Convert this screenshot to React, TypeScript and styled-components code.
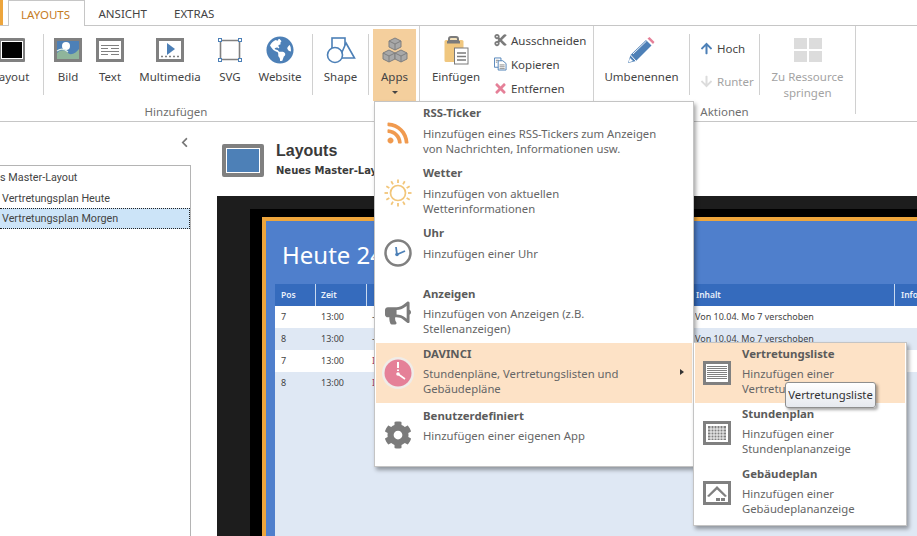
import React from 'react';
import styled, { createGlobalStyle } from 'styled-components';
import {
  FaArrowDown,
  FaArrowUp,
  FaBullhorn,
  FaChevronLeft,
  FaCog,
  FaCut,
  FaGlobeAmericas,
  FaRss,
  FaTimes,
} from 'react-icons/fa';

const UI_FONT = `'Noto Sans', 'Open Sans', sans-serif`;

const GlobalStyle = createGlobalStyle`
  html, body {
    margin: 0;
    width: 917px;
    height: 536px;
    overflow: hidden;
    background: #fff;
  }
  body {
    font-family: ${UI_FONT};
    font-size: 12px;
    color: #444;
  }
`;

const Page = styled.div`
  position: relative;
  width: 917px;
  height: 536px;
  overflow: hidden;
`;

/* tabs */
const TabBar = styled.div`
  display: flex;
  height: 25px;
  border-bottom: 1px solid #c6c6c6;
  box-sizing: content-box;
`;

const FileStub = styled.div`
  width: 3px;
  height: 25px;
  background: #eda53c;
  margin-right: 5px;
`;

const Tab = styled.div<{ $active?: boolean }>`
  box-sizing: border-box;
  height: ${(p) => (p.$active ? '26px' : '25px')};
  padding: 0 ${(p) => (p.$active ? '12px' : '13.5px')};
  min-width: ${(p) => (p.$active ? '77px' : '0')};
  line-height: 28px;
  font-size: 11.5px;
  text-transform: uppercase;
  white-space: nowrap;
  color: ${(p) => (p.$active ? '#c67c1e' : '#444')};
  background: #fff;
  ${(p) => p.$active && 'border: 1px solid #c6c6c6; border-bottom: 0; line-height: 27px;'}
`;

/* ribbon */
const Ribbon = styled.div`
  display: flex;
  height: 95px;
  margin-left: -16px;
  border-bottom: 1px solid #c6c6c6;
`;

const Group = styled.div<{ $width: number; $edge?: boolean }>`
  box-sizing: border-box;
  width: ${(p) => p.$width}px;
  display: flex;
  flex-direction: column;
  height: ${(p) => (p.$edge ? '88px' : '95px')};
  ${(p) => p.$edge && 'border-right: 1px solid #d0d0d0;'}
`;

const GroupEdge = styled.div`
  width: 1px;
  height: 88px;
  background: #d0d0d0;
  flex: none;
`;

const GroupBody = styled.div`
  display: flex;
  height: 75px;
  padding-top: 3px;
`;

const GroupLabel = styled.div<{ $inset?: number }>`
  text-align: center;
  font-size: 11.5px;
  line-height: 16px;
  padding-right: ${(p) => p.$inset ?? 0}px;
  color: #6f6f6f;
`;

const Separator = styled.div`
  width: 1px;
  height: 61px;
  margin-top: 5px;
  background: #d0d0d0;
  flex: none;
`;

const RibbonButton = styled.div<{ $width: number; $open?: boolean; $disabled?: boolean; $gap?: number }>`
  box-sizing: border-box;
  flex: none;
  width: ${(p) => p.$width}px;
  height: 72px;
  margin-left: ${(p) => p.$gap ?? 0}px;
  padding-top: 8px;
  display: flex;
  flex-direction: column;
  align-items: center;
  background: ${(p) => (p.$open ? '#f4cf9d' : 'transparent')};
  color: ${(p) => (p.$disabled ? '#a3a3a3' : '#444')};
`;

const IconBox = styled.div`
  height: 26px;
  display: flex;
  align-items: center;
  justify-content: center;
  flex: none;
`;

const ButtonLabel = styled.div`
  margin-top: 6px;
  font-size: 11.5px;
  line-height: 15.5px;
  text-align: center;
  white-space: nowrap;
`;

const Caret = styled.div`
  width: 0;
  height: 0;
  margin-top: 6px;
  border-left: 3px solid transparent;
  border-right: 3px solid transparent;
  border-top: 3px solid #444;
`;

const SmallStack = styled.div<{ $width: number; $pad: number; $rowGap: number; $top: number }>`
  box-sizing: border-box;
  width: ${(p) => p.$width}px;
  padding-left: ${(p) => p.$pad}px;
  padding-top: ${(p) => p.$top}px;
  display: flex;
  flex-direction: column;
  gap: ${(p) => p.$rowGap}px;
  flex: none;
`;

const SmallButton = styled.div<{ $disabled?: boolean }>`
  display: flex;
  align-items: center;
  height: 16px;
  gap: 4px;
  font-size: 11.5px;
  white-space: nowrap;
  color: ${(p) => (p.$disabled ? '#a3a3a3' : '#444')};
`;

const SmallIcon = styled.span`
  width: 13px;
  height: 14px;
  display: inline-flex;
  align-items: center;
  justify-content: center;
  flex: none;
`;

/* body */
const Body = styled.div`
  display: flex;
  height: 414px;
`;

const Sidebar = styled.div`
  width: 191px;
  flex: none;
  display: flex;
  flex-direction: column;
`;

const SidebarHead = styled.div`
  box-sizing: border-box;
  height: 43px;
  flex: none;
  display: flex;
  align-items: center;
  justify-content: flex-end;
  padding: 0 1px 3px 0;
  color: #777;
`;

const TreeBox = styled.div`
  flex: 1;
  border-top: 1px solid #b4b4b4;
  border-right: 1px solid #b4b4b4;
  padding-top: 1px;
  overflow: hidden;
`;

const TreeRow = styled.div<{ $selected?: boolean; $level?: number }>`
  box-sizing: border-box;
  height: 21px;
  line-height: 21px;
  font-family: Roboto, sans-serif;
  font-size: 10.8px;
  white-space: nowrap;
  color: #444;
  padding-left: ${(p) => (p.$level ? 2 : 0)}px;
  text-indent: ${(p) => (p.$level ? 0 : -25)}px;
  ${(p) =>
    p.$selected &&
    'background: #cce4f8; border: 1px dotted #222; border-left: 0; line-height: 20px; margin-top: -1px;'}
`;

const Content = styled.div`
  flex: 1;
  min-width: 0;
  padding-left: 26px;
  display: flex;
  flex-direction: column;
`;

const ContentHead = styled.div`
  height: 74px;
  flex: none;
  padding: 22px 0 0 5px;
  box-sizing: border-box;
  display: flex;
  gap: 12px;
`;

const LayoutGlyph = styled.div`
  box-sizing: border-box;
  width: 42px;
  height: 33px;
  border: 4px solid #808080;
  border-radius: 2px;
  background: #4d80b7;
  box-shadow: inset 0 0 0 1px #fff;
`;

const HeadTitle = styled.div`
  font-family: 'Liberation Sans', Arial, sans-serif;
  font-weight: bold;
  font-size: 16px;
  line-height: 18px;
  margin-top: -2px;
  color: #3a3a3a;
`;

const HeadSub = styled.div`
  font-family: 'DejaVu Sans', Verdana, sans-serif;
  font-weight: bold;
  font-size: 10px;
  line-height: 13px;
  margin-top: 4px;
  color: #3a3a3a;
  white-space: nowrap;
`;

const Preview = styled.div`
  flex: 1;
  min-height: 0;
  overflow: hidden;
  background: #1d1d1d;
  padding: 13px 0 0 33px;
  display: flex;
`;

const PreviewInner = styled.div`
  flex: 1;
  min-width: 0;
  background: #000;
  padding: 8px 0 0 12px;
  display: flex;
`;

const Slide = styled.div`
  flex: 1;
  min-width: 0;
  background: #4f7fcc;
  border-top: 4px solid #eda53c;
  border-left: 4px solid #eda53c;
  padding-left: 9px;
  display: flex;
  flex-direction: column;
`;

const SlideTitle = styled.div`
  height: 63px;
  flex: none;
  padding-left: 7px;
  box-sizing: border-box;
  font-size: 24px;
  line-height: 68px;
  color: #fff;
  white-space: nowrap;
`;

const TableHead = styled.div`
  display: flex;
  height: 22px;
  flex: none;
  background: #356bbd;
  color: #e9f0fa;
  font-size: 8.5px;
  font-weight: 600;
  line-height: 22px;
`;

const Cell = styled.div<{ $w: number; $line?: boolean; $red?: boolean; $pad?: number }>`
  box-sizing: border-box;
  width: ${(p) => p.$w}px;
  flex: none;
  padding-left: ${(p) => p.$pad ?? 6}px;
  white-space: nowrap;
  overflow: hidden;
  ${(p) => p.$line && 'border-right: 1px solid #c9d9ef;'}
  ${(p) => p.$red && 'color: #a43a62;'}
`;

const TableBody = styled.div`
  background: #dfe8f4;
  flex: 1;
`;

const TableRow = styled.div<{ $even?: boolean }>`
  display: flex;
  height: 22px;
  line-height: 22px;
  font-size: 9px;
  color: #444;
  background: ${(p) => (p.$even ? '#dfe8f4' : '#fff')};
`;

/* drop menus */
const Menu = styled.div<{ $left: number; $top: number; $width: number; $height: number; $pad?: number }>`
  position: absolute;
  box-sizing: border-box;
  left: ${(p) => p.$left}px;
  top: ${(p) => p.$top}px;
  width: ${(p) => p.$width}px;
  height: ${(p) => p.$height}px;
  background: #fff;
  border: 1px solid #c4c4c4;
  box-shadow: 2px 3px 4px rgba(0, 0, 0, 0.35);
  padding: ${(p) => p.$pad ?? 0}px 1px 0;
`;

const MenuItem = styled.div<{ $hot?: boolean; $gap?: number }>`
  position: relative;
  box-sizing: border-box;
  height: 60px;
  margin-top: ${(p) => p.$gap ?? 0}px;
  padding-left: 47px;
  background: ${(p) => (p.$hot ? '#fde2c6' : 'transparent')};
`;

const MenuIcon = styled.div`
  position: absolute;
  left: 0;
  top: 0;
  bottom: 0;
  width: 44px;
  display: flex;
  align-items: center;
  justify-content: center;
  color: #7b7b7b;
`;

const MenuTitle = styled.div<{ $top?: number }>`
  font-weight: 700;
  font-size: 11.4px;
  line-height: 15px;
  padding-top: ${(p) => p.$top ?? 3}px;
  color: #5b5b5b;
`;

const MenuText = styled.div<{ $gap?: number }>`
  font-size: 11.3px;
  line-height: 15px;
  margin-top: ${(p) => p.$gap ?? 5}px;
  color: #666;
  white-space: pre-line;
`;

const Arrow = styled.div`
  position: absolute;
  right: 8px;
  top: 26px;
  width: 0;
  height: 0;
  border-top: 3.5px solid transparent;
  border-bottom: 3.5px solid transparent;
  border-left: 4px solid #333;
`;

const Tooltip = styled.div`
  position: absolute;
  left: 785px;
  top: 382px;
  box-sizing: border-box;
  width: 91px;
  height: 26px;
  border: 1px solid #8e8e8e;
  border-radius: 3px;
  background: linear-gradient(#ffffff, #e6e9ef);
  box-shadow: 2px 2px 3px rgba(0, 0, 0, 0.35);
  font-size: 11.3px;
  line-height: 24px;
  text-align: center;
  color: #333;
  white-space: nowrap;
`;

/* drawn icons */
const LayoutIcon = () => (
  <svg width="27" height="24" viewBox="0 0 27 24">
    <rect x="1.5" y="1.5" width="25" height="21" rx="1.5" fill="#000" stroke="#808080" strokeWidth="3" />
    <rect x="3.5" y="3.5" width="21" height="17" fill="none" stroke="#fff" />
  </svg>
);

const PictureIcon = () => (
  <svg width="28" height="24" viewBox="0 0 28 24">
    <rect x="1.5" y="1.5" width="25" height="21" fill="#4d80b7" stroke="#808080" strokeWidth="3" />
    <circle cx="12" cy="8" r="4" fill="#fff" />
    <path d="M3 15c4-4 8-3 11 0s8 0 11-4v10H3z" fill="#8fb59b" />
    <path d="M3 13c4-3 8-2 11 1" fill="none" stroke="#dfeee5" strokeWidth="1.2" />
  </svg>
);

const TextIcon = () => (
  <svg width="28" height="24" viewBox="0 0 28 24">
    <rect x="1.5" y="1.5" width="25" height="21" fill="#fff" stroke="#808080" strokeWidth="3" />
    <path d="M5 7.5h18M5 10.5h7M15 10.5h8M5 13.5h18M5 16.5h7M15 16.5h8" stroke="#808080" strokeWidth="1.2" />
  </svg>
);

const MediaIcon = () => (
  <svg width="28" height="24" viewBox="0 0 28 24">
    <rect x="1.5" y="1.5" width="25" height="21" fill="#fff" stroke="#808080" strokeWidth="3" />
    <path d="M11 5l8 6-8 6z" fill="#4d80b7" />
    <path d="M5 18.5h18" stroke="#808080" strokeWidth="1.6" strokeDasharray="2 2" />
  </svg>
);

const SvgIcon = () => (
  <svg width="24" height="24" viewBox="0 0 24 24">
    <path d="M3.5 2.5h17M3.5 21.5h17M2.5 3.5v17M21.5 3.5v17" stroke="#808080" strokeWidth="1.6" />
    {[0, 20].flatMap((x) =>
      [0, 20].map((y) => (
        <rect key={`${x}-${y}`} x={x + 0.5} y={y + 0.5} width="3" height="3" fill="#fff" stroke="#4d80b7" />
      )),
    )}
  </svg>
);

const ShapeIcon = () => (
  <svg width="30" height="27" viewBox="0 0 30 27">
    <g fill="#fff" stroke="#4d80b7" strokeWidth="1.6">
      <rect x="6" y="1" width="13" height="13" />
      <path d="M20 6l8.5 15h-15z" />
      <circle cx="9" cy="18" r="7.5" />
    </g>
  </svg>
);

const CubesIcon = () => (
  <svg width="26" height="27" viewBox="0 0 26 27">
    <g fill="#a8a8a8" stroke="#7f7f7f" strokeWidth="1">
      <path d="M13 1l6 3v6l-6 3-6-3V4z" />
      <path d="M7 13l6 3v6l-6 3-6-3v-6z" />
      <path d="M19 13l6 3v6l-6 3-6-3v-6z" />
      <path d="M7 4l6 3 6-3M13 7v6M1 16l6 3 6-3M7 19v6M13 16l6 3 6-3M19 19v6" fill="none" />
    </g>
  </svg>
);

const ClipboardIcon = () => (
  <svg width="25" height="30" viewBox="0 0 25 30">
    <rect x="0.5" y="5" width="19" height="22" rx="1.5" fill="#f0c77f" />
    <path d="M5 6V4a2 2 0 012-2h5a2 2 0 012 2v2z" fill="#f4e2bb" stroke="#7b7b7b" strokeWidth="2" />
    <rect x="3" y="6" width="13" height="2.5" fill="#7b7b7b" />
    <rect x="10.5" y="13" width="13.5" height="16" fill="#fff" stroke="#7b7b7b" />
    <path d="M13 18h9M13 21.5h9M13 25h9" stroke="#7b7b7b" strokeWidth="1.5" />
  </svg>
);

const CopyIcon = () => (
  <svg width="14" height="14" viewBox="0 0 14 14">
    <path d="M.5.5h7v10h-7z" fill="#fff" stroke="#4d80b7" />
    <path d="M4.5 3.5h5l3.5 3v7H4.500z" fill="#fff" stroke="#4d80b7" />
    <path d="M6 8h5.500M6 10h5.500M6 12h5.500M2 3h3M2 5h1.500" stroke="#777" strokeWidth="0.9" />
  </svg>
);

const PencilIcon = () => (
  <svg width="27" height="26" viewBox="0 0 27 26">
    <path d="M0 26l2.500-8L18 3l5.500 5.500L8 24z" fill="#4d80b7" />
    <path d="M2.500 18l5.500 6" stroke="#fff" strokeWidth="1" />
    <path d="M5 17L18.500 4" stroke="#fff" strokeWidth="0.9" />
    <path d="M19.500 1.500l2-1.500 5 5-1.500 2z" fill="#e58098" />
    <path d="M.5 25.500l1.500-4.500 3 3z" fill="#fff" />
  </svg>
);

const GridIcon = () => (
  <svg width="28" height="24" viewBox="0 0 28 24" fill="#dcdcdc">
    <rect x="0" y="0" width="13" height="11" />
    <rect x="15" y="0" width="13" height="11" />
    <rect x="0" y="13" width="13" height="11" />
    <rect x="15" y="13" width="13" height="11" />
  </svg>
);

const SunIcon = () => (
  <svg width="28" height="28" viewBox="0 0 28 28">
    <circle cx="14" cy="14" r="7.500" fill="none" stroke="#f2c67a" strokeWidth="1.700" />
    <g stroke="#f2c67a" strokeWidth="1.800">
      {[0, 30, 60, 90, 120, 150, 180, 210, 240, 270, 300, 330].map((a) => (
        <path key={a} d="M14 0.500v3.500" transform={`rotate(${a} 14 14)`} />
      ))}
    </g>
  </svg>
);

const ClockIcon = () => (
  <svg width="28" height="28" viewBox="0 0 28 28">
    <circle cx="14" cy="14" r="12.500" fill="#fff" stroke="#808080" strokeWidth="2.500" />
    <path d="M13 16L12 8" stroke="#4d80b7" strokeWidth="1.800" />
    <path d="M13 15.500l8-3.500" stroke="#4d80b7" strokeWidth="1.800" />
    <circle cx="13" cy="15.500" r="1.800" fill="#4d80b7" />
  </svg>
);

const DavinciIcon = () => (
  <svg width="32" height="32" viewBox="0 0 32 32">
    <circle cx="16" cy="16" r="16" fill="#f0ece8" />
    <circle cx="16" cy="16" r="13.500" fill="#e58098" />
    <path d="M16 5v9" stroke="#fff" strokeWidth="2" strokeDasharray="6 1.500" />
    <circle cx="16" cy="17" r="1.800" fill="#fff" />
    <path d="M16 17l7 5" stroke="#fff" strokeWidth="1.600" />
  </svg>
);

const ListFrame = () => (
  <svg width="28" height="24" viewBox="0 0 28 24">
    <rect x="1.500" y="1.500" width="25" height="21" fill="#fff" stroke="#808080" strokeWidth="3" />
    <path d="M4 5.500h20M4 7.500h20M4 9.500h20M4 11.500h20M4 13.500h20M4 15.500h20M4 17.500h20" stroke="#808080" />
  </svg>
);

const TimetableIcon = () => (
  <svg width="28" height="24" viewBox="0 0 28 24">
    <rect x="1.500" y="1.500" width="25" height="21" fill="#fff" stroke="#808080" strokeWidth="3" />
    <rect x="5" y="5" width="18" height="14" fill="#808080" />
    <path d="M8 5v14M11 5v14M14 5v14M17 5v14M20 5v14M5 8h18M5 11h18M5 14h18M5 17h18" stroke="#fff" strokeWidth="0.900" />
  </svg>
);

const BuildingIcon = () => (
  <svg width="28" height="24" viewBox="0 0 28 24">
    <rect x="1.500" y="1.500" width="25" height="21" fill="#fff" stroke="#808080" strokeWidth="3" />
    <path d="M4 15l10-10 10 10-2 1-8-7.500L6 16z" fill="#808080" />
    <rect x="13" y="17" width="4" height="3" fill="#808080" />
    <rect x="18" y="17" width="4" height="3" fill="#808080" />
  </svg>
);

const appItems = [
  { title: 'RSS-Ticker', text: 'Hinzufügen eines RSS-Tickers zum Anzeigen\nvon Nachrichten, Informationen usw.', icon: <FaRss size={24} color="#f09a4f" />, top: 2, textGap: 6 },
  { title: 'Wetter', text: 'Hinzufügen von aktuellen\nWetterinformationen', icon: <SunIcon />, top: 2, textGap: 6 },
  { title: 'Uhr', text: 'Hinzufügen einer Uhr', icon: <ClockIcon />, top: 2, textGap: 6 },
  { title: 'Anzeigen', text: 'Hinzufügen von Anzeigen (z.B.\nStellenanzeigen)', icon: <FaBullhorn size={26} color="#7b7b7b" /> },
  { title: 'DAVINCI', text: 'Stundenpläne, Vertretungslisten und\nGebäudepläne', icon: <DavinciIcon />, hot: true },
  { title: 'Benutzerdefiniert', text: 'Hinzufügen einer eigenen App', icon: <FaCog size={28} color="#7b7b7b" />, gap: 2 },
];

const davinciItems = [
  { title: 'Vertretungsliste', text: 'Hinzufügen einer\nVertretungslistenanzeige', icon: <ListFrame />, hot: true },
  { title: 'Stundenplan', text: 'Hinzufügen einer\nStundenplananzeige', icon: <TimetableIcon /> },
  { title: 'Gebäudeplan', text: 'Hinzufügen einer\nGebäudeplananzeige', icon: <BuildingIcon /> },
];

const rows = [
  { pos: '7', col: '–', text: 'Von 10.04. Mo 7 verschoben' },
  { pos: '8', col: '–', text: 'Von 10.04. Mo 7 verschoben' },
  { pos: '7', col: 'I', text: '', red: true },
  { pos: '8', col: 'I', text: '', red: true },
];

export default function App() {
  return (
    <Page>
      <GlobalStyle />
      <TabBar>
        <FileStub />
        <Tab $active>Layouts</Tab>
        <Tab>Ansicht</Tab>
        <Tab>Extras</Tab>
      </TabBar>

      <Ribbon>
        <Group $width={435}>
          <GroupBody>
            <RibbonButton $width={54}>
              <IconBox><LayoutIcon /></IconBox>
              <ButtonLabel>Layout</ButtonLabel>
            </RibbonButton>
            <RibbonButton $width={5} />
            <Separator />
            <RibbonButton $width={48}>
              <IconBox><PictureIcon /></IconBox>
              <ButtonLabel>Bild</ButtonLabel>
            </RibbonButton>
            <RibbonButton $width={36}>
              <IconBox><TextIcon /></IconBox>
              <ButtonLabel>Text</ButtonLabel>
            </RibbonButton>
            <RibbonButton $width={84}>
              <IconBox><MediaIcon /></IconBox>
              <ButtonLabel>Multimedia</ButtonLabel>
            </RibbonButton>
            <RibbonButton $width={36}>
              <IconBox><SvgIcon /></IconBox>
              <ButtonLabel>SVG</ButtonLabel>
            </RibbonButton>
            <RibbonButton $width={64}>
              <IconBox><FaGlobeAmericas size={28} color="#4d80b7" /></IconBox>
              <ButtonLabel>Website</ButtonLabel>
            </RibbonButton>
            <Separator />
            <RibbonButton $width={55}>
              <IconBox><ShapeIcon /></IconBox>
              <ButtonLabel>Shape</ButtonLabel>
            </RibbonButton>
            <Separator />
            <RibbonButton $width={43} $gap={4} $open>
              <IconBox><CubesIcon /></IconBox>
              <ButtonLabel>Apps</ButtonLabel>
              <Caret />
            </RibbonButton>
          </GroupBody>
          <GroupLabel $inset={51}>Hinzufügen</GroupLabel>
        </Group>
        <GroupEdge />

        <Group $width={174} $edge>
          <GroupBody>
            <RibbonButton $width={72}>
              <IconBox><ClipboardIcon /></IconBox>
              <ButtonLabel>Einfügen</ButtonLabel>
            </RibbonButton>
            <SmallStack $width={101} $pad={2} $rowGap={8} $top={3}>
              <SmallButton><SmallIcon><FaCut size={14} color="#7b7b7b" /></SmallIcon>Ausschneiden</SmallButton>
              <SmallButton><SmallIcon><CopyIcon /></SmallIcon>Kopieren</SmallButton>
              <SmallButton><SmallIcon><FaTimes size={15} color="#e58098" /></SmallIcon>Entfernen</SmallButton>
            </SmallStack>
          </GroupBody>
        </Group>

        <Group $width={261}>
          <GroupBody>
            <RibbonButton $width={95}>
              <IconBox><PencilIcon /></IconBox>
              <ButtonLabel>Umbenennen</ButtonLabel>
            </RibbonButton>
            <Separator />
            <SmallStack $width={69} $pad={10} $rowGap={17} $top={11}>
              <SmallButton><SmallIcon><FaArrowUp size={13} color="#4d80b7" /></SmallIcon>Hoch</SmallButton>
              <SmallButton $disabled><SmallIcon><FaArrowDown size={13} color="#dcdcdc" /></SmallIcon>Runter</SmallButton>
            </SmallStack>
            <Separator />
            <RibbonButton $width={95} $disabled>
              <IconBox><GridIcon /></IconBox>
              <ButtonLabel>Zu Ressource<br />springen</ButtonLabel>
            </RibbonButton>
          </GroupBody>
          <GroupLabel>Aktionen</GroupLabel>
        </Group>
        <GroupEdge />
      </Ribbon>

      <Body>
        <Sidebar>
          <SidebarHead><FaChevronLeft size={11} /></SidebarHead>
          <TreeBox>
            <TreeRow>Neues Master-Layout</TreeRow>
            <TreeRow $level={1}>Vertretungsplan Heute</TreeRow>
            <TreeRow $level={1} $selected>Vertretungsplan Morgen</TreeRow>
          </TreeBox>
        </Sidebar>
        <Content>
          <ContentHead>
            <LayoutGlyph />
            <div>
              <HeadTitle>Layouts</HeadTitle>
              <HeadSub>Neues Master-Layout</HeadSub>
            </div>
          </ContentHead>
          <Preview>
            <PreviewInner>
              <Slide>
                <SlideTitle>Heute 24.04.</SlideTitle>
                <TableHead>
                  <Cell $w={41} $line>Pos</Cell>
                  <Cell $w={51} $line $pad={5}>Zeit</Cell>
                  <Cell $w={328} $pad={8}>Klasse</Cell>
                  <Cell $w={200} $line $pad={1}>Inhalt</Cell>
                  <Cell $w={60}>Info</Cell>
                </TableHead>
                <TableBody>
                  {rows.map((r, i) => (
                    <TableRow key={i} $even={i % 2 === 1}>
                      <Cell $w={41}>{r.pos}</Cell>
                      <Cell $w={51} $pad={5}>13:00</Cell>
                      <Cell $w={328} $pad={5} $red={r.red}>{r.col}</Cell>
                      <Cell $w={200} $pad={0}>{r.text}</Cell>
                    </TableRow>
                  ))}
                </TableBody>
              </Slide>
            </PreviewInner>
          </Preview>
        </Content>
      </Body>

      <Menu $left={374} $top={101} $width={320} $height={366} $pad={1}>
        {appItems.map((item) => (
          <MenuItem key={item.title} $hot={item.hot} $gap={item.gap}>
            <MenuIcon>{item.icon}</MenuIcon>
            <MenuTitle $top={item.top}>{item.title}</MenuTitle>
            <MenuText $gap={item.textGap}>{item.text}</MenuText>
            {item.hot && <Arrow />}
          </MenuItem>
        ))}
      </Menu>

      <Menu $left={693} $top={342} $width={214} $height={184}>
        {davinciItems.map((item) => (
          <MenuItem key={item.title} $hot={item.hot}>
            <MenuIcon>{item.icon}</MenuIcon>
            <MenuTitle>{item.title}</MenuTitle>
            <MenuText>{item.text}</MenuText>
          </MenuItem>
        ))}
      </Menu>

      <Tooltip>Vertretungsliste</Tooltip>
    </Page>
  );
}
